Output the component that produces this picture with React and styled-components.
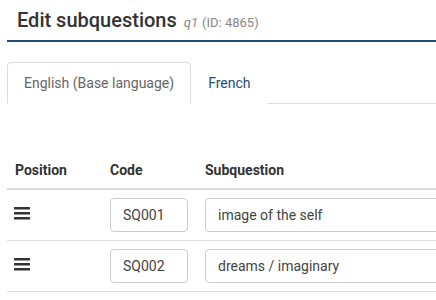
import React, { useState } from 'react'
import styled, { createGlobalStyle } from 'styled-components'

const GlobalStyle = createGlobalStyle`
  html, body {
    margin: 0;
    overflow: hidden;
    background: #fff;
    font-family: Roboto, "Liberation Sans", sans-serif;
  }
`

const Page = styled.div`
  width: 560px;
  padding-left: 7px;
`

// HEADER
const Header = styled.div`
  height: 40px;
  padding-left: 10px;
  display: flex;
  align-items: center;
  border-bottom: 2px solid #1f4e79;
`
const Title = styled.h3`
  margin: 0;
  font-size: 20px;
  font-weight: 500;
  color: #333;
`
const Meta = styled.span`
  margin-left: 7px;
  font-size: 13px;
  font-weight: 400;
  color: #888;

  em {
    margin-right: 4px;
  }
`

// TABS
const TabBar = styled.div`
  margin-top: 20px;
  display: flex;
  border-bottom: 1px solid #ddd;
`
const Tab = styled.button`
  height: 42px;
  margin-bottom: -1px;
  padding: 0 16px;
  font-family: inherit;
  font-size: 14px;
  background: #fff;
  border: 1px solid ${({ active }) => (active ? '#ddd' : 'transparent')};
  border-bottom-color: ${({ active }) => (active ? '#fff' : 'transparent')};
  border-radius: 4px 4px 0 0;
  color: ${({ active }) => (active ? '#666' : '#1f4e79')};
  cursor: pointer;
`

// TABLE
const Table = styled.div`
  margin-top: 48px;
`
const Row = styled.div`
  display: grid;
  grid-template-columns: 95px 95px 1fr;
  align-items: ${({ head }) => (head ? 'center' : 'start')};
  border-bottom: ${({ head }) => (head ? '2px' : '1px')} solid #ddd;
  box-sizing: border-box;
  height: ${({ head }) => (head ? '38px' : '51px')};
`
const HeadCell = styled.div`
  padding: 0 8px;
  font-size: 14px;
  font-weight: 700;
  color: #333;
`
const Cell = styled.div`
  padding: 8px 8px 0;
`
const Handle = styled.div`
  padding: 17px 0 0 7px;
  color: #333;
  line-height: 0;
`
const Input = styled.input`
  box-sizing: border-box;
  width: ${({ wide }) => (wide ? '100%' : '78px')};
  height: 34px;
  padding: 0 12px;
  border: 1px solid #ccc;
  border-radius: 4px;
  font-family: inherit;
  font-size: 14px;
  color: #444;
  outline: none;
`

const Bars = () => (
  <svg width="16" height="13" viewBox="0 0 16 13">
    <rect x="0" y="0" width="16" height="2.6" rx="0.5" fill="currentColor" />
    <rect x="0" y="5" width="16" height="2.6" rx="0.5" fill="currentColor" />
    <rect x="0" y="10" width="16" height="2.6" rx="0.5" fill="currentColor" />
  </svg>
)

const rows = [
  { code: 'SQ001', text: 'image of the self' },
  { code: 'SQ002', text: 'dreams / imaginary' },
]

const App = () => {
  const [tab, setTab] = useState(0)
  return (
    <Page>
      <GlobalStyle />
      <Header>
        <Title>
          Edit subquestions
          <Meta>
            <em>q1</em>(ID: 4865)
          </Meta>
        </Title>
      </Header>
      <TabBar>
        <Tab active={tab == 0} onClick={() => setTab(0)}>
          English (Base language)
        </Tab>
        <Tab active={tab == 1} onClick={() => setTab(1)}>
          French
        </Tab>
      </TabBar>
      <Table>
        <Row head>
          <HeadCell>Position</HeadCell>
          <HeadCell>Code</HeadCell>
          <HeadCell>Subquestion</HeadCell>
        </Row>
        {rows.map((r) => (
          <Row key={r.code}>
            <Handle>
              <Bars />
            </Handle>
            <Cell>
              <Input defaultValue={r.code} />
            </Cell>
            <Cell>
              <Input wide defaultValue={r.text} />
            </Cell>
          </Row>
        ))}
      </Table>
    </Page>
  )
}

export default App
